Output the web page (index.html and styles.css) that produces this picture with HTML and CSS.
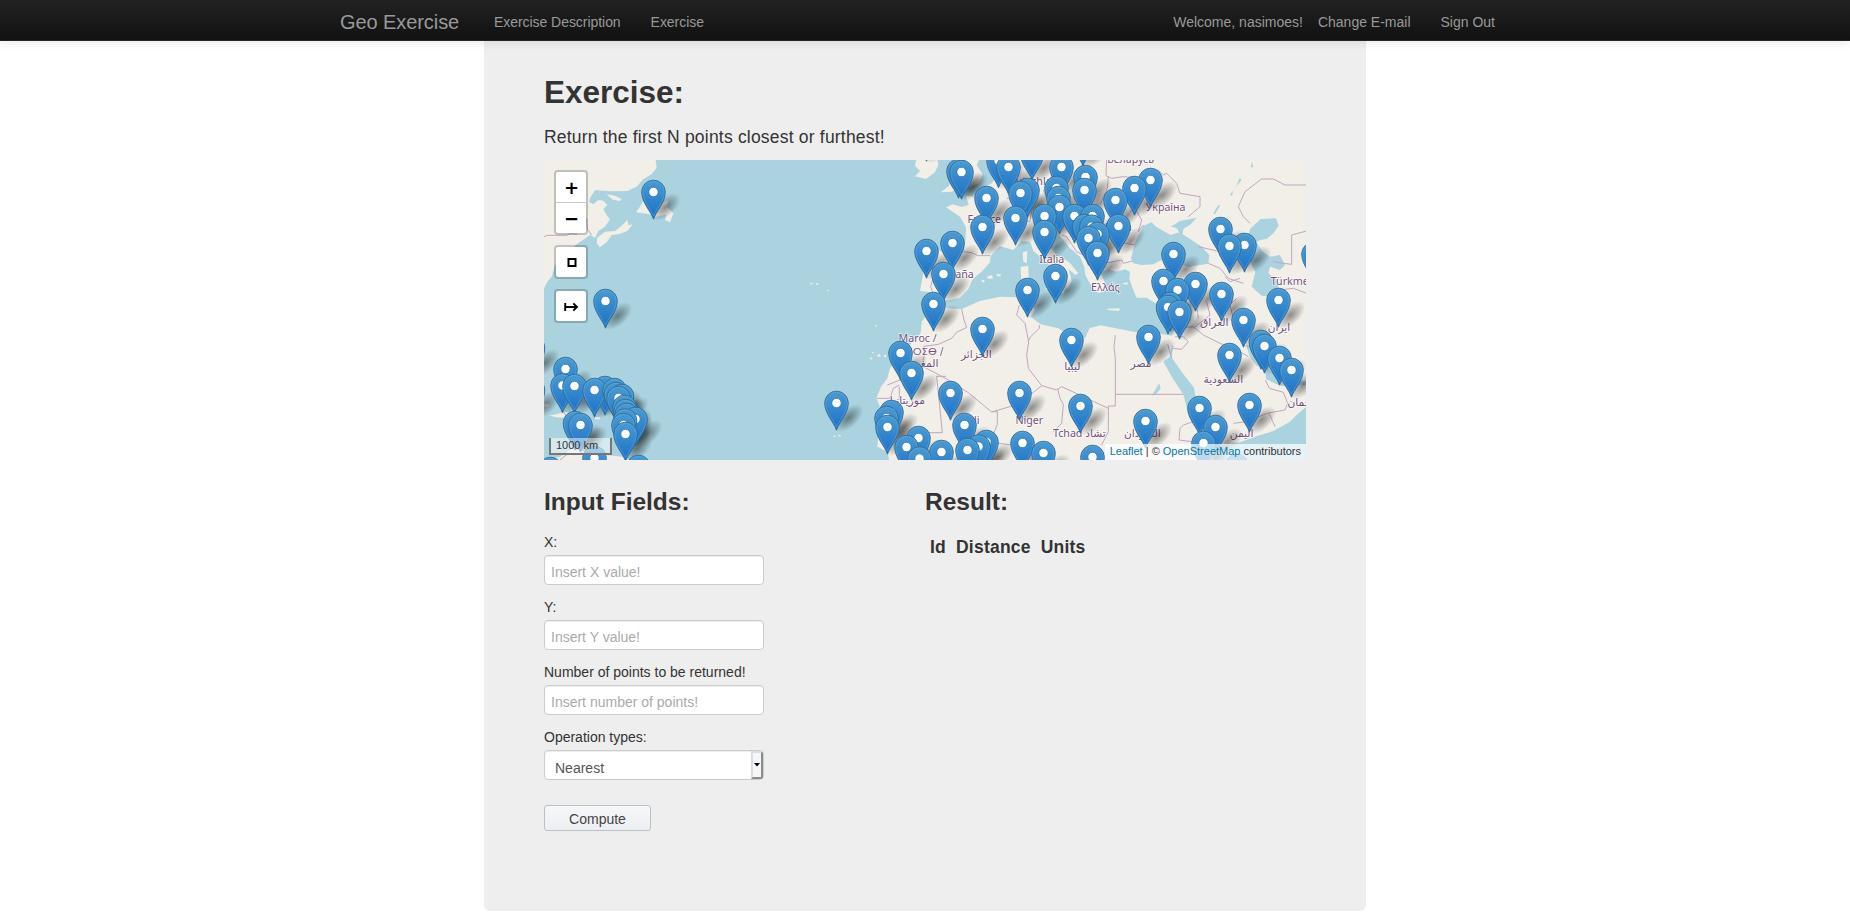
FILE: index.html
```html
<!DOCTYPE html>
<html lang="en">
<head>
<meta charset="utf-8">
<title>Geo Exercise</title>
<link rel="stylesheet" href="styles.css">
</head>
<body>
<header class="navbar">
  <div class="navbar-inner">
    <a class="brand">Geo Exercise</a>
    <nav class="nav nav-left"><a>Exercise Description</a><a>Exercise</a></nav>
    <nav class="nav nav-right"><span class="welcome">Welcome, nasimoes!</span><a>Change E-mail</a><a>Sign Out</a></nav>
  </div>
</header>
<main class="panel">
  <h1 class="title">Exercise:</h1>
  <p class="lead">Return the first N points closest or furthest!</p>
  <div class="map">
    <svg class="tiles" width="762" height="300" viewBox="0 0 762 300">
      <defs>
        <linearGradient id="pinFill" x1="0" y1="0" x2="0" y2="1"><stop offset="0" stop-color="#4a9bd2"/><stop offset="1" stop-color="#1a6fc6"/></linearGradient>
        <radialGradient id="shadeFill"><stop offset="0" stop-color="#000" stop-opacity=".42"/><stop offset=".5" stop-color="#000" stop-opacity=".22"/><stop offset="1" stop-color="#000" stop-opacity="0"/></radialGradient>
        <g id="pin">
          <path d="M0 27.2C-2 20-11.8 11-11.8 0A11.8 11.8 0 0 1 11.8 0C11.8 11 2 20 0 27.2Z" fill="url(#pinFill)" stroke="#2e6c97" stroke-width=".9"/>
          <path d="M0 24C-2.2 18-10.7 10-10.7 0A10.7 10.7 0 0 1 10.7 0C10.7 10 2.2 18 0 24Z" fill="none" stroke="#6ab0dd" stroke-opacity=".45" stroke-width="1"/>
          <circle r="4.7" fill="#fff" stroke="#2e77ae" stroke-width=".8"/>
        </g>
        <ellipse id="shade" rx="18" ry="9.5" transform="translate(12 15) rotate(-42)" fill="url(#shadeFill)"/>
      </defs>
      <rect width="762" height="300" fill="#aad3df"/>
      <!-- North America and the Caribbean -->
      <g transform="translate(-4 -5) scale(.33333)" class="land">
        <path d="M0 0H345L350 38L335 58L310 72L290 95L262 108L215 109L165 106L152 125L147 140L160 148L175 135L190 137L202 150L190 162L200 180L210 193L195 215L175 228L165 248L150 240L110 268L70 305L45 330L35 365L22 380L12 400H0Z"/>
        <path d="M200 118L225 122L245 132L240 138L218 134Z M172 248L195 230L225 228L245 212L262 195L265 210L278 208L262 228L238 237L215 240L200 262L180 277L170 265Z M288 172L300 155L308 140L320 128L350 118L345 140L368 145L385 135L380 155L400 175L390 202L375 195L380 178L350 185L330 178Z"/>
        <path d="M28 782L60 775L80 770L110 785L150 790L160 797L120 795L80 790L50 787Z M0 740L30 750L18 757L0 753Z M165 787H180V793H165Z M12 918L60 905L100 880L150 895L200 900L245 905L280 918Z"/>
        <path d="M12 245L22 241H80L90 236L112 238M140 190L142 222L155 240M60 915L85 895M70 770L82 788" class="border"/>
      </g>
      <!-- Europe, Africa and the Middle East -->
      <g transform="translate(256 -5) scale(.33333)" class="land">
        <path d="M612 0L600 50L575 85L540 105L520 125L498 122L506 150L485 156L458 148L438 157L460 172L480 185L498 217L496 260L490 290L440 300L412 282L375 285L360 300L372 340L366 375L360 408L390 412L415 437L395 450L385 472L365 500L362 535L350 550L326 572L295 610L270 640L262 670L243 695L229 730L240 755L230 790L236 830L232 875L262 890L270 925H1530V0Z"/>
        <path d="M468 0H545L530 30L548 58L538 82L515 95L480 98L455 110L422 112L448 92L452 64L470 50Z M352 0H410L415 30L405 52L378 72L345 64L360 48L345 32Z"/>
        <g class="sea">
          <path d="M415 437L448 436L480 428L505 402L518 372L545 350L570 322L572 302L600 274L640 285L665 258L700 262L720 240L740 215L765 225L810 280L840 305L853 335L856 360L875 395L895 415L918 405L912 375L900 352L925 343L948 350L975 343L990 350L988 372L1000 405L1010 428L1040 428L1075 450L1120 445L1140 440L1132 500L1116 542L1085 537L1060 536L1000 530L940 518L902 511L868 520L856 548L820 550L775 520L722 508L692 485L704 465L690 424L650 427L600 425L540 438L485 462L440 460Z"/>
          <path d="M993 310L1004 265L1030 212L1055 202L1068 215L1090 228L1112 240L1138 232L1128 218L1112 215L1140 198L1190 188L1172 208L1150 222L1148 238L1175 255L1205 275L1228 300L1225 326L1165 336L1125 320L1085 315L1060 328L1025 330L1000 325Z"/>
          <path d="M1350 222L1382 192L1428 190L1436 212L1420 235L1400 252L1380 255L1370 262L1388 290L1410 305L1440 300L1455 330L1440 345L1410 335L1405 355L1430 375L1438 410L1435 428L1385 422L1355 395L1366 350L1345 310L1340 270Z"/>
          <path d="M1090 620L1112 603L1148 655L1182 698L1190 745L1215 790L1250 840L1235 860L1200 820L1165 778L1150 718L1118 670Z M1108 610L1116 570L1120 572L1114 612Z"/>
          <path d="M1338 570L1360 570L1385 610L1410 648L1450 665L1525 680V690L1440 692L1398 672L1396 640L1370 632L1350 605Z"/>
          <path d="M1525 750L1490 780L1470 800L1420 828L1365 845L1320 862L1260 872L1225 900L1260 925H1525Z"/>
          <path d="M1356 20L1360 35L1352 38ZM1318 70L1325 75L1312 90L1305 105ZM1300 105L1290 120L1296 122ZM1255 150L1260 152L1245 178L1240 175ZM1055 722L1078 685L1082 700L1068 718Z"/>
        </g>
        <path d="M685 245L712 242L740 265L770 300L808 322L835 355L826 360L806 342L815 378L802 402L785 365L740 322L700 288Z M662 335L685 332L686 368L664 374Z M668 292L682 288L680 325L670 320Z M735 400L772 392L800 388L790 415L760 412Z M920 461L960 460L957 468L925 465ZM965 385L985 382L980 390Z M945 398L955 400L948 406Z"/>
        <path d="M560 365L575 360L580 370L566 372ZM590 358H602V364H590ZM545 375H553V382H545ZM215 592L220 590V597ZM210 608H217V613H210ZM232 600L240 597L242 604L234 606ZM250 604L258 598V608ZM28 385L38 383L36 389ZM48 383L58 387L50 390ZM80 404L90 406L82 408ZM225 510L234 512L228 515ZM100 842H106V846H100ZM115 840H122V844H115Z"/>
        <g class="border">
          <path d="M490 290L515 293L535 302L570 302M372 325L395 330L400 365L392 395L398 412M485 462L492 495L500 517L470 532L455 550L415 568L372 574M370 574L372 600L370 635L440 672L505 713L575 771L630 755L680 728L725 692L770 705L785 695L850 725M370 607L368 640M262 690L300 675L365 675M230 730H270M270 730L280 700L298 690M298 695V735M408 664H438M410 664L427 833H330M575 770L592 770V808L575 850L595 865L640 870M658 450L650 480L675 505L686 560L680 600L685 640L725 692M718 510V520L692 545L684 560M773 700L780 730L790 748L785 805L760 830"/>
          <path d="M946 540L942 575L946 610V718H1150M946 718V753H925L925 830L905 870M850 725L925 760M1103 568L1115 610M1120 580L1145 583L1165 560L1150 545L1125 545M1120 520L1180 515L1210 540L1260 565L1320 590L1345 605M1180 520L1230 480L1220 440M1300 490L1290 450L1310 430M1396 675L1408 700L1450 712L1463 745L1455 765L1400 775L1340 800L1300 805M1407 774L1425 815M1140 820L1150 810L1180 800M1140 820L1137 855L1175 860M1195 490L1190 450"/>
          <path d="M920 0L918 62L935 70L970 65L1020 70L1035 52L1075 45L1090 60L1100 55L1130 85L1140 115L1200 125L1200 155L1165 185M925 65L922 100L900 150M990 170L1005 160L1025 195L1015 230L1030 210M960 262L1005 270M865 330L895 325L930 322L965 315L970 325L998 318M1195 275L1260 290L1300 310M1225 325L1260 340L1285 370L1330 385M1275 365L1290 380L1320 370M1520 90L1455 90L1420 72H1385L1335 110L1315 155L1330 185L1350 205M1418 320L1450 325L1475 328V240L1520 228M1440 405L1480 400L1520 415M620 95L645 130L620 130M650 190L690 200L695 170M730 105L740 130L790 140M785 240L800 245L830 290L850 300M780 210L830 220"/>
        </g>
        <g class="label">
          <text x="553" y="203">France</text><text x="700" y="91">Deutschland</text><text x="467" y="369">España</text><text x="755" y="324">Italia</text>
          <text x="1097" y="167">Україна</text><text x="992" y="23">Беларусь</text><text x="916" y="408">Ελλάς</text><text x="1412" y="390" class="start">Türkmenistan</text>
          <text x="931" y="228">Moldova</text>
          <text x="353" y="562">Maroc /</text><text x="430" y="600" class="tif">ⵍⵎⵖⵔⵉⴱ /</text><text x="365" y="635">المغرب</text>
          <text x="322" y="748">موريتانيا</text><text x="529" y="608">الجزائر</text><text x="817" y="644">ليبيا</text><text x="688" y="808">Niger</text><text x="507" y="808">Mali</text>
          <text x="838" y="846">Tchad تشاد</text><text x="1023" y="636">مصر</text><text x="1243" y="512">العراق</text><text x="1437" y="527">ایران</text>
          <text x="1270" y="684">السعودية</text><text x="1498" y="754">عمان</text><text x="1325" y="845">اليمن</text><text x="1027" y="846">السودان</text>
        </g>
      </g>
      <g id="shadows"></g>
      <g id="pins"></g>
    </svg>
    <div class="controls">
      <div class="control"><span>+</span><span>−</span></div>
      <div class="control"><span><svg width="10" height="10"><rect x="1.5" y="2" width="7" height="7" fill="#fff" stroke="#000" stroke-width="2"/></svg></span></div>
      <div class="control"><span><svg width="15" height="11"><path d="M1.2 2V10M1 6H13M9.3 2.4L13 6L9.3 9.6" fill="none" stroke="#000" stroke-width="1.9"/></svg></span></div>
    </div>
    <div class="scale">1000 km</div>
    <div class="attribution"><a>Leaflet</a> | © <a>OpenStreetMap</a> contributors</div>
  </div>
  <div class="columns">
    <form class="column">
      <h2>Input Fields:</h2>
      <label>X:</label><input type="text" placeholder="Insert X value!">
      <label>Y:</label><input type="text" placeholder="Insert Y value!">
      <label>Number of points to be returned!</label><input type="text" placeholder="Insert number of points!">
      <label>Operation types:</label>
      <div class="select"><span>Nearest</span><i><svg width="6" height="4"><path d="M0 0H6L3 3.6Z"/></svg></i></div>
      <button type="button">Compute</button>
    </form>
    <section class="column">
      <h2>Result:</h2>
      <div class="headings"><b>Id</b><b>Distance</b><b>Units</b></div>
    </section>
  </div>
</main>
<script src="markers.js"></script>
</body>
</html>
```
FILE: styles.css
```css
* { box-sizing: border-box; }
body { margin: 0; height: 913px; overflow: hidden; background: #fff; color: #333; font: 14px/20px "Liberation Sans", Arial, sans-serif; }
.navbar { position: relative; z-index: 2; height: 41px; background: linear-gradient(#222, #111); border-bottom: 1px solid #252525; box-shadow: 0 1px 10px rgba(0,0,0,.1); color: #999; }
.navbar-inner { display: flex; width: 1170px; margin: 0 auto; padding-top: 12px; }
.brand { width: 139px; font-size: 20px; letter-spacing: -.08px; white-space: nowrap; }
.nav { display: flex; padding-left: 15px; gap: 30px; }
.nav-left { letter-spacing: -.05px; }
.nav-right { margin-left: auto; padding-right: 15px; }
.welcome { margin-right: -15px; }
.panel { width: 882px; height: 870px; margin: 0 auto; padding: 0 60px; background: #eee; border-radius: 0 0 6px 6px; }
.title { margin: 0; padding-top: 31px; font-size: 31.5px; line-height: 40px; }
.lead { margin: 0; padding-top: 15px; height: 48px; font-size: 17.5px; letter-spacing: .2px; line-height: 20px; }
.map { position: relative; height: 300px; overflow: hidden; }
.tiles { display: block; }
.land { fill: #f2efe9; stroke: none; }
.sea { fill: #aad3df; }
.border { fill: none; stroke: #c0a6c0; stroke-width: 3; stroke-linejoin: round; }
.label { fill: #74517a; stroke: #fff; stroke-opacity: .75; stroke-width: 5; paint-order: stroke; stroke-linejoin: round; font: 32px "Noto Sans", "DejaVu Sans", sans-serif; text-anchor: middle; }
.tif { font-family: "DejaVu Sans", sans-serif; font-size: 30px; text-anchor: end; }
.start { text-anchor: start; }
.controls { position: absolute; left: 10px; top: 10px; display: grid; gap: 10px; }
.control { border: 2px solid rgba(0,0,0,.2); background: #fff; background-clip: padding-box; border-radius: 4px; }
.control span { display: flex; align-items: center; justify-content: center; width: 30px; height: 30px; padding-left: 1px; color: #000; font: bold 18px/30px "DejaVu Sans", sans-serif; }
.control:first-child span { padding-top: 2px; }
.control span + span { border-top: 1px solid #ccc; height: 31px; }
.scale { position: absolute; left: 5px; bottom: 5px; width: 63px; height: 17px; border: 2px solid #777; border-top: 0; padding: 1px 5px; background: rgba(255,255,255,.5); font-size: 11px; line-height: 12px; white-space: nowrap; }
.attribution { position: absolute; right: 0; bottom: 0; height: 16px; padding: 0 5px; background: rgba(255,255,255,.7); font-size: 11px; line-height: 15px; white-space: nowrap; }
.attribution a { color: #0078a8; }
.columns { display: grid; grid-template-columns: 381px 381px; }
h2 { margin: 0; padding-top: 22px; font-size: 24.5px; line-height: 40px; }
.column { display: flex; flex-direction: column; align-items: flex-start; }
label { height: 20px; line-height: 20px; margin: 12px 0 3px; }
h2 + label { margin-top: 10px; }
input, .select { width: 220px; height: 30px; border: 1px solid #ccc; border-radius: 4px; background: #fff; box-shadow: inset 0 1px 1px rgba(0,0,0,.075); color: #555; font: 14px/20px "Liberation Sans", Arial, sans-serif; }
input { padding: 6px 6px 2px; }
input::placeholder { color: #aaa; }
.select { display: flex; justify-content: space-between; overflow: hidden; }
.select span { padding: 7px 0 0 10px; }
.select i { display: flex; align-items: center; justify-content: center; width: 12px; background: #f4f6f9; border: 2px solid; border-color: #ddd #8b8b8b #8b8b8b #ddd; }
button { width: 107px; height: 26px; margin-top: 25px; padding: 1px 0 0; border: 1px solid #bbc0c7; border-radius: 3px; background: linear-gradient(#f6f7f9, #eceff2); color: #444; font: 14px/20px "Liberation Sans", Arial, sans-serif; }
.headings { display: flex; gap: 10px; padding: 15px 0 0 5px; font-size: 17.5px; letter-spacing: .22px; line-height: 20px; }
```
FILE: markers.js
```js
// Pin head centres, in map pixels; southern pins overlap northern ones.
const points = [
  [109.5,32],[61.5,141],[21.5,209],[18.5,225.5],[30.5,226],[50.5,230],[61,228],[70.5,230],[78,236],[74.5,238],[72,234],[80.5,247],[81.5,251],[82.5,255],[91.5,259],[81,260.5],[79.5,265],[81.5,274],[31,263],[36.5,265],[50.5,298],[6.5,309],[94.5,307],[-11,188],[-11,230],
  [417.5,12],[414.5,11],[382.5,-26],[454.5,.5],[464.5,7],[488,-7],[517.5,7],[541.5,17],[540.5,30],[539,-21],[442.5,38],[476.5,33],[483.5,30],[438.5,67],[471.5,58],[500.5,56],[500.5,72],[382.5,91],[408.5,83],[399.5,114],[389.5,144],[483.5,130],[511.5,116],[438.5,169],[356.5,193],[367.5,213],[292.5,243],[406.5,233],[475.5,233],[347.5,252],[342.5,258],[343.5,267],[420.5,265],[374.5,278],[362.5,287],[375.5,298.5],[397.5,292],[423.5,290],[434.5,286.5],[442.5,282],[478.5,283],[499.5,293],
  [512.5,28],[514.5,38],[515.5,47],[530.5,56],[540.5,66],[571.5,40],[590.5,28],[606.5,20],[574.5,66],[548.5,56],[547.5,66.7],[553.5,74],[544.5,78],[553.5,93],[676.5,69],[685.5,86],[700.5,85],[629.5,94],[619.5,121],[633.5,130],[651.5,124],[677.5,134],[626.5,144],[624,147],[635.5,152],[734.5,140],[769.5,94],
  [527.5,180],[536.5,246],[548.5,297],[604.5,177],[601.5,261],[685.5,195],[699.5,160],[717,182],[720.5,186],[735.5,198],[747.5,210],[705.5,245],[655.5,248],[671.5,267],[659.5,283],[693,306]
].sort((a, b) => a[1] - b[1]);
const draw = (layer, symbol) => {
  document.getElementById(layer).innerHTML = points
    .map(([x, y]) => `<use href="#${symbol}" x="${x}" y="${y}"/>`).join('');
};
draw('shadows', 'shade');
draw('pins', 'pin');
```
